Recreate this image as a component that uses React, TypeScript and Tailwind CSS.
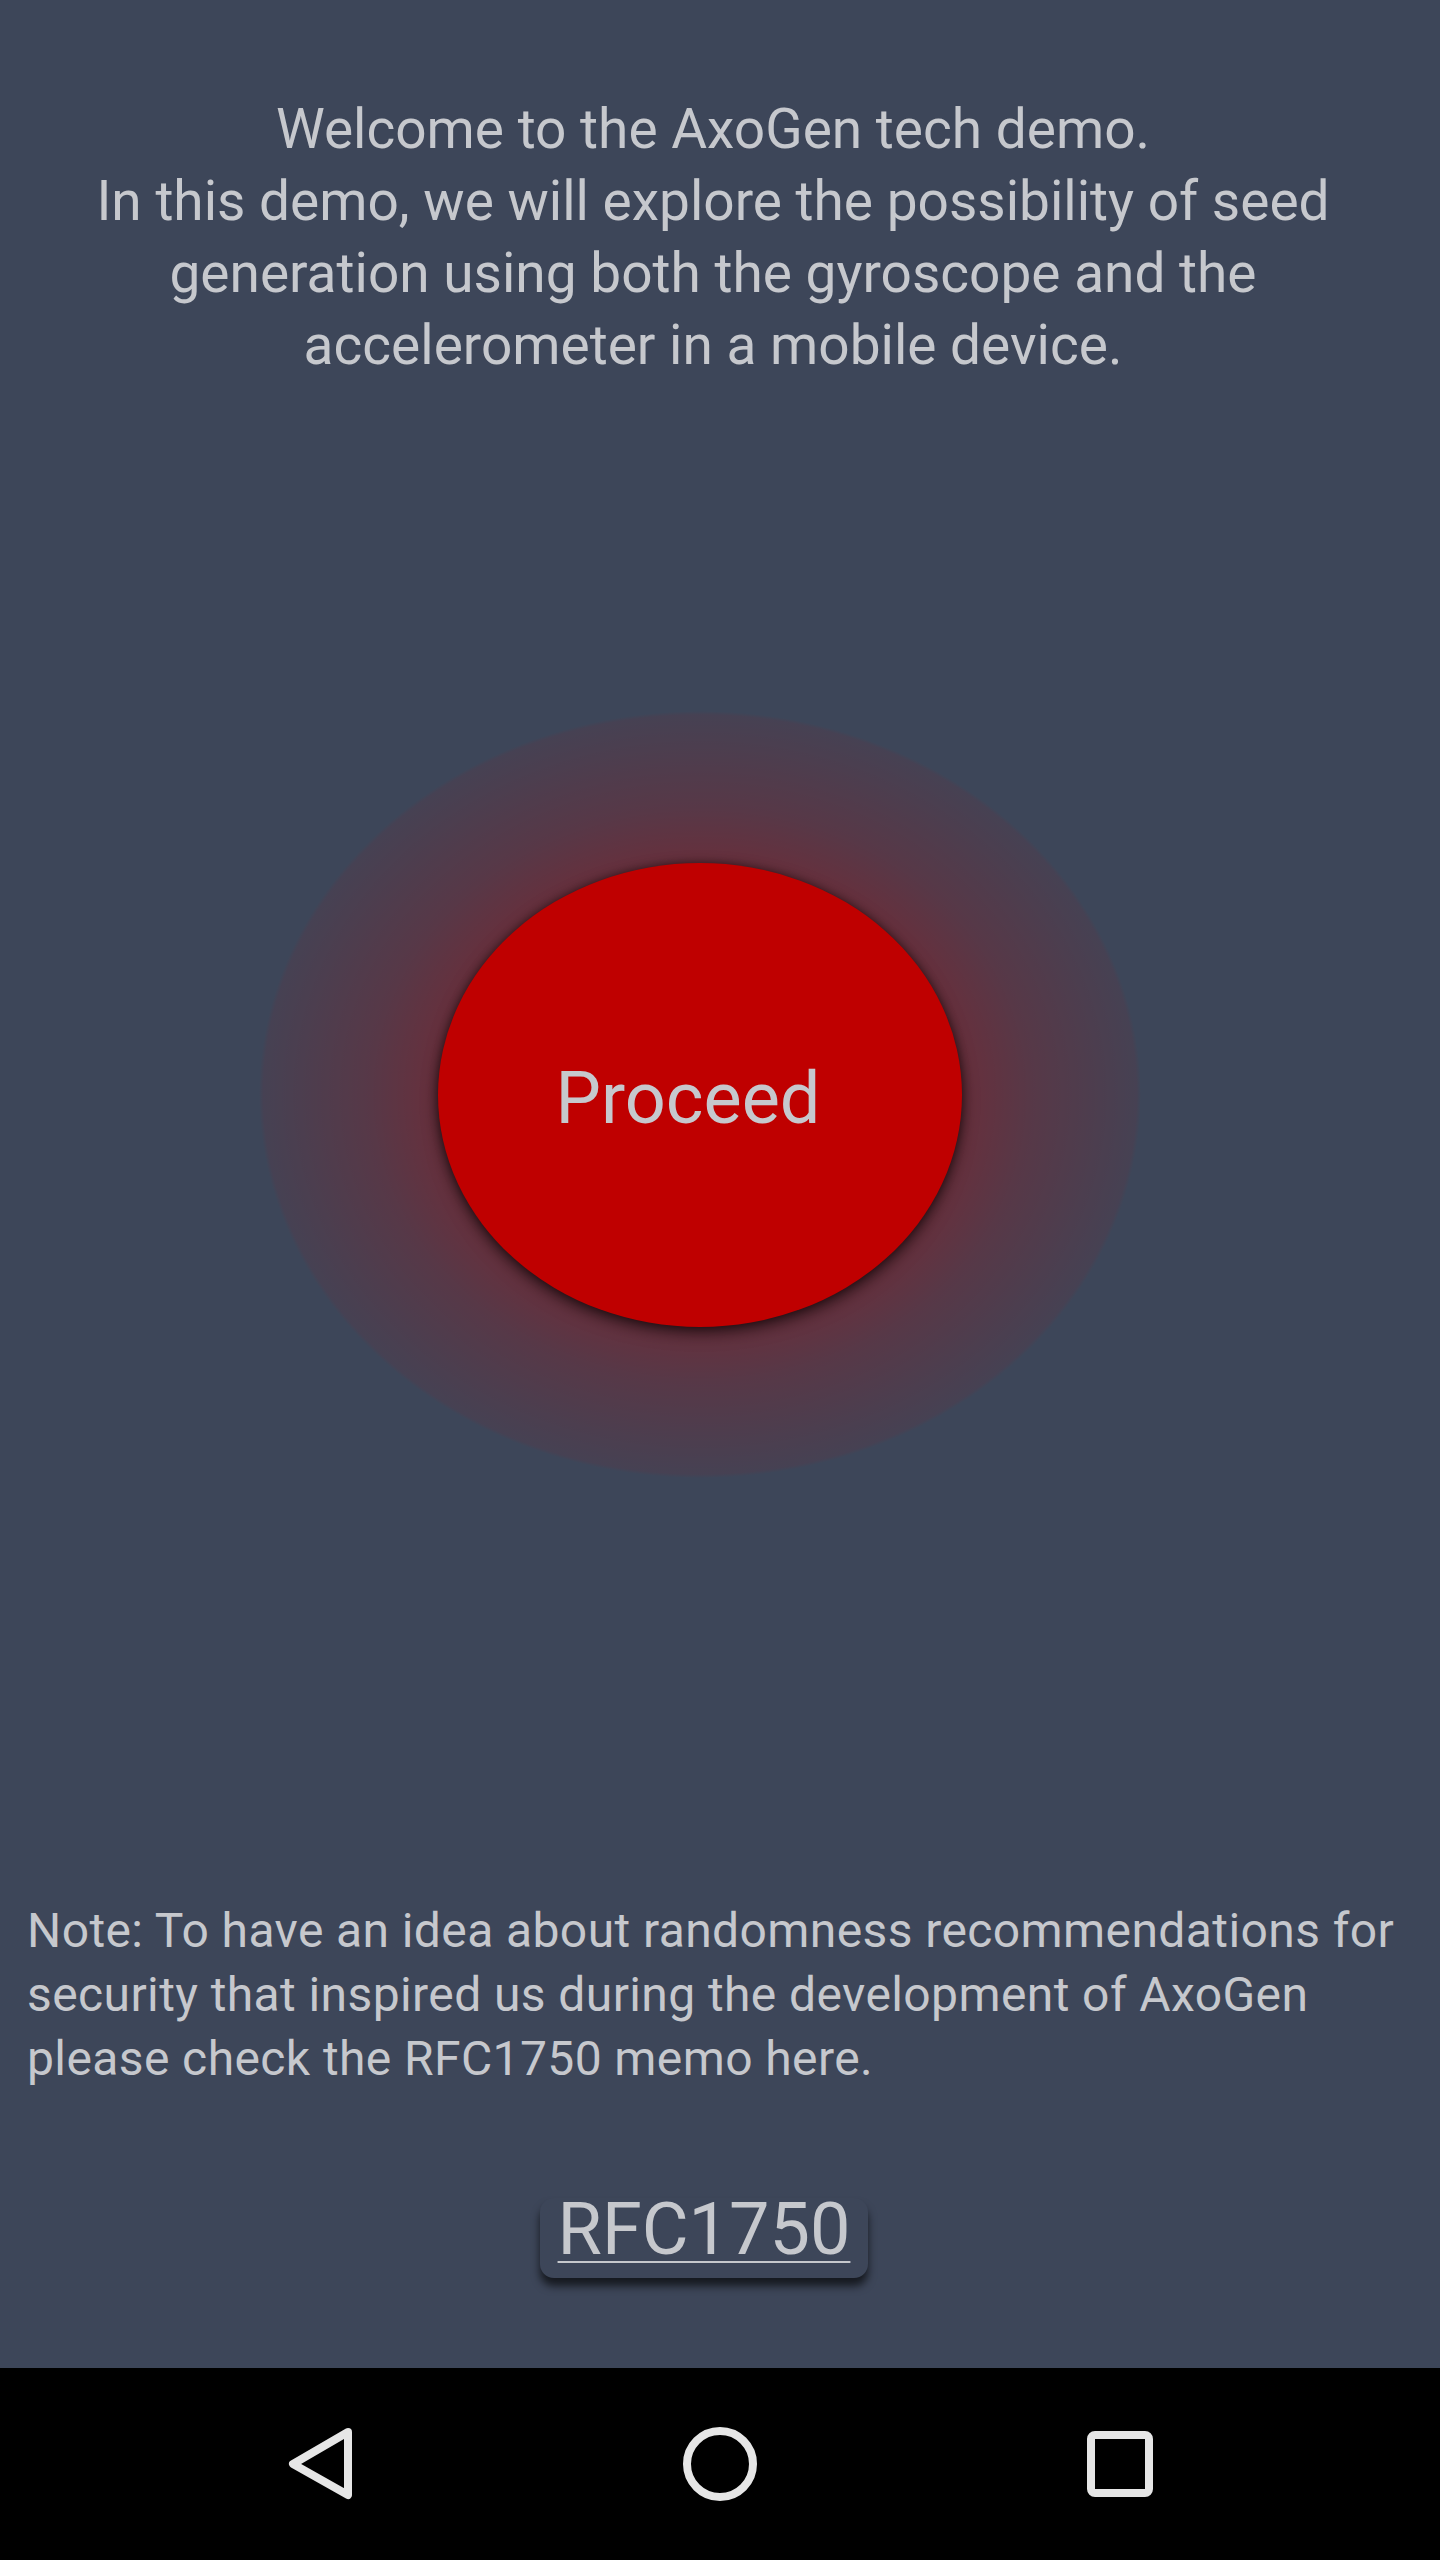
import React from "react";

export default function App() {
  return (
    <div className="w-[1440px] h-[2560px] bg-[#3d4659] flex flex-col text-[#c6c8cd] font-['Roboto',sans-serif] overflow-hidden">
      <div className="pt-[93px] pl-[54px] pr-[68px] text-center text-[55px] leading-[72px]">
        <p>Welcome to the AxoGen tech demo.</p>
        <p>In this demo, we will explore the possibility of seed generation using both the gyroscope and the accelerometer in a mobile device.</p>
      </div>

      <div className="mt-[330px] ml-[259px] w-[882px] h-[767px] flex items-center justify-center rounded-[50%] bg-[radial-gradient(ellipse_closest-side,rgba(191,0,0,0.34)_58%,rgba(191,0,0,0.2)_75%,rgba(191,0,0,0.07)_99%,rgba(191,0,0,0)_100%)]">
        <button className="w-[524px] h-[464px] rounded-[50%] bg-[#bf0000] flex items-center justify-center shadow-[0_6px_16px_rgba(0,0,0,0.6),0_0_8px_rgba(0,0,0,0.4)]">
          <span className="text-[72px] leading-none text-[#c6c8cd] -ml-[24px] mt-[8px]">Proceed</span>
        </button>
      </div>

      <div className="mt-[421px] pl-[27px] pr-[20px] text-[48px] leading-[64px] tracking-[0.4px]">
        <p>Note: To have an idea about randomness recommendations for security that inspired us during the development of AxoGen please check the RFC1750 memo here.</p>
      </div>

      <div className="mt-[107px] ml-[540px] w-[328px] h-[80px] rounded-[14px] bg-[#3d4659] shadow-[0_8px_8px_rgba(0,0,0,0.65)] flex justify-center">
        <span className="text-[72px] leading-[64px] underline decoration-[2px] underline-offset-[7px]">RFC1750</span>
      </div>

      <div className="mt-auto h-[192px] bg-black flex items-center justify-center gap-[320px]">
        <svg width="80" height="80" viewBox="0 0 80 80" fill="none" stroke="#e6e6e6" strokeWidth="8" strokeLinejoin="round">
          <path d="M68 8 L13 40 L68 71 Z" />
        </svg>
        <svg width="80" height="80" viewBox="0 0 80 80" fill="none" stroke="#e6e6e6" strokeWidth="8">
          <circle cx="40" cy="40" r="33" />
        </svg>
        <svg width="80" height="80" viewBox="0 0 80 80" fill="none" stroke="#e6e6e6" strokeWidth="8">
          <rect x="11" y="11" width="58" height="58" rx="4" />
        </svg>
      </div>
    </div>
  );
}
